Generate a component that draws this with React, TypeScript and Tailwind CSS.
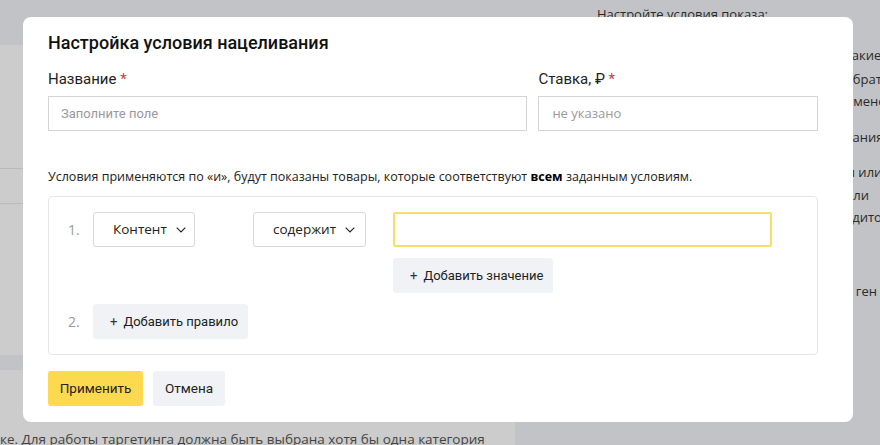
import React from "react";

const Chevron = () => (
  <svg width="10" height="6" viewBox="0 0 10 6" fill="none" className="ml-[9px]">
    <path d="M0.7 0.7 L5 5 L9.3 0.7" stroke="#222" strokeWidth="1.1" />
  </svg>
);

const roboto = { fontFamily: 'Roboto, "Noto Sans", sans-serif' };

export default function App() {
  const font = { fontFamily: '"Open Sans", "Noto Sans", sans-serif' };
  return (
    <div className="relative w-[880px] h-[445px] overflow-hidden bg-[#c1c3c6] flex text-[#333]" style={font}>
      {/* background page, left */}
      <div className="w-[515px] flex flex-col shrink-0">
        <div className="h-[45px] shrink-0" />
        <div className="flex-1 bg-[#cccccc] flex flex-col">
          <div className="h-[123px] shrink-0" />
          <div className="h-[35px] shrink-0 border-t border-[#b9b9b9]" />
          <div className="h-[152px] shrink-0 border-t border-[#b9b9b9]" />
          <div className="h-[15px] shrink-0 bg-[#c1c3c6]" />
          <div className="pt-[60px] text-[13.5px] leading-[18px] text-[#444] whitespace-nowrap">
            ке. Для работы таргетинга должна быть выбрана хотя бы одна категория
          </div>
        </div>
      </div>
      {/* background page, right */}
      <div className="flex-1 flex flex-col text-[13px] leading-[22px] text-[#2b2b2b] whitespace-nowrap">
        <div className="pl-[82px] mt-[3px]">Настройте условия показа:</div>
        <div className="pl-[330px] mt-[19px]">какие</div>
        <div className="pl-[330px] mt-[2px]">обрат</div>
        <div className="pl-[330px]">именен</div>
        <div className="pl-[330px] mt-[14px]">вания</div>
        <div className="pl-[330px] mt-[13px]">ы или</div>
        <div className="pl-[330px] mt-[1px]">или</div>
        <div className="pl-[330px]">адито</div>
        <div className="pl-[330px] mt-[52px]">в ген</div>
      </div>

      {/* modal */}
      <div className="absolute left-[23px] top-[17px] w-[830px] h-[405px] bg-white rounded-[8px] pl-[25px] pr-[35px] pt-[14px] text-[#000]">
        <div className="text-[18px] leading-[24px] font-medium text-[#111]" style={roboto}>
          Настройка условия нацеливания
        </div>

        <div className="flex gap-[11px] mt-[14px]" style={roboto}>
          <div className="w-[480px] flex flex-col">
            <div className="text-[15px] leading-[20px] text-[#222]">
              Название <span className="text-[#e5323f]">*</span>
            </div>
            <div className="mt-[7px] h-[35px] border border-[#d5d5d5] flex items-center pl-[12px] text-[13px] text-[#9a9a9a]">
              Заполните поле
            </div>
          </div>
          <div className="w-[280px] flex flex-col">
            <div className="text-[15px] leading-[20px] text-[#222]">
              Ставка, ₽ <span className="text-[#e5323f]">*</span>
            </div>
            <div className="mt-[7px] h-[35px] border border-[#d5d5d5] flex items-center pl-[13px] text-[13px] text-[#9a9a9a]" style={font}>
              не указано
            </div>
          </div>
        </div>

        <div className="mt-[37px] text-[12.5px] leading-[18px] text-[#222]">
          Условия применяются по «и», будут показаны товары, которые соответствуют <b className="font-bold text-[#000]">всем</b> заданным условиям.
        </div>

        <div className="mt-[10px] w-[770px] border border-[#e6e6e6] rounded-[4px] pt-[15px] pb-[15px] pl-[19px] flex flex-col gap-[11px]">
          <div className="flex items-start">
            <div className="w-[25px] h-[35px] flex items-center text-[14px] text-[#9a9a9a]">1.</div>
            <div className="w-[160px]">
              <div className="w-[102px] h-[35px] border border-[#d9d9d9] rounded-[3px] flex items-center pl-[19px] text-[13.5px] text-[#222]">
                Контент
                <Chevron />
              </div>
            </div>
            <div className="w-[140px]">
              <div className="w-[113px] h-[35px] border border-[#d9d9d9] rounded-[3px] flex items-center pl-[19px] text-[13.5px] text-[#222]">
                содержит
                <Chevron />
              </div>
            </div>
            <div className="flex flex-col gap-[11px] items-start">
              <div className="w-[379px] h-[35px] border-2 border-[#f7df67] rounded-[2px]" />
              <div className="h-[35px] w-[160px] pl-[17px] bg-[#f0f2f5] rounded-[3px] flex items-center text-[13px] text-[#222] whitespace-nowrap" style={roboto}>
                <span className="mr-[6px] text-[#333]">+</span>Добавить значение
              </div>
            </div>
          </div>
          <div className="flex items-center">
            <div className="w-[25px] h-[35px] flex items-center text-[14px] text-[#9a9a9a]">2.</div>
            <div className="h-[35px] w-[155px] pl-[17px] bg-[#f0f2f5] rounded-[3px] flex items-center text-[13px] text-[#222] whitespace-nowrap" style={roboto}>
              <span className="mr-[6px] text-[#333]">+</span>Добавить правило
            </div>
          </div>
        </div>

        <div className="mt-[16px] flex gap-[10px]" style={roboto}>
          <div className="w-[95px] h-[35px] bg-[#fcd94f] rounded-[3px] flex items-center justify-center text-[13.5px] text-[#222]">
            Применить
          </div>
          <div className="w-[72px] h-[35px] bg-[#f0f2f5] rounded-[3px] flex items-center justify-center text-[13.5px] text-[#222]">
            Отмена
          </div>
        </div>
      </div>
    </div>
  );
}
